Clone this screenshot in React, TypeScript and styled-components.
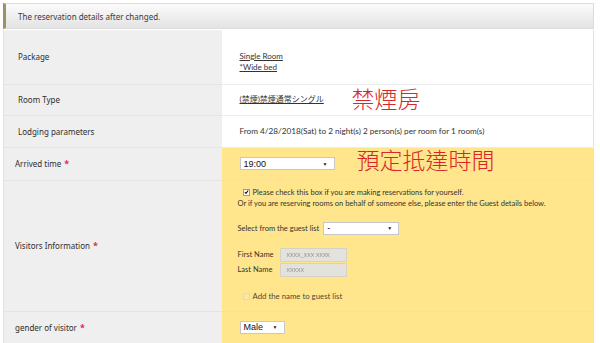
import styled, { createGlobalStyle } from "styled-components";

const GlobalStyle = createGlobalStyle`
  body {
    margin: 0;
    background: #ffffff;
    font-family: "Noto Sans", "Noto Sans CJK JP", sans-serif;
    color: #333333;
  }
`;

const Page = styled.div`
  width: 591px;
  padding: 3px 0 0 3px;
`;

const Header = styled.div`
  height: 26px;
  display: flex;
  align-items: center;
  padding-left: 12px;
  border: 1px solid #dcdcdc;
  border-left: 3px solid #9c9264;
  background: linear-gradient(#fbfbfb, #e3e3e3);
  font-size: 8px;
  color: #3a3a3a;
  box-sizing: border-box;
`;

const Table = styled.table`
  border-collapse: collapse;
  width: 100%;
  margin-top: 1px;
  table-layout: fixed;
  border-left: 1px solid #e2e2e2;
  border-right: 1px solid #e2e2e2;
`;

const Label = styled.td<{ $indent?: number }>`
  width: 218px;
  box-sizing: border-box;
  background: #efefef;
  padding: 0 0 0 ${(p) => p.$indent ?? 14}px;
  font-size: 8px;
  color: #2e2e2e;
  vertical-align: middle;
  border-bottom: 1px solid #e4e4e4;
`;

const Value = styled.td<{ $yellow?: boolean; $h: number; $size?: number }>`
  height: ${(p) => p.$h}px;
  box-sizing: border-box;
  background: ${(p) => (p.$yellow ? "#ffe68c" : "#ffffff")};
  padding: 0 0 0 18px;
  font-family: Lato, "Noto Sans CJK JP", sans-serif;
  font-size: ${(p) => p.$size ?? 8}px;
  color: #333333;
  vertical-align: middle;
  position: relative;
  border-bottom: 1px solid ${(p) => (p.$yellow ? "#fbe090" : "#ececec")};
`;

const Required = styled.span`
  color: #e0245a;
  font-size: 9px;
  font-weight: bold;
  margin-left: 3px;
`;

const LinkText = styled.a`
  color: #333333;
  text-decoration: underline;
  display: block;
  line-height: 11px;
`;

const PackageBox = styled.div`
  padding-top: 10px;
`;

const Note = styled.span<{ $left: number; $top: number }>`
  position: absolute;
  left: ${(p) => p.$left}px;
  top: ${(p) => p.$top}px;
  font-family: "Noto Sans CJK TC", "Noto Sans CJK JP", sans-serif;
  font-size: 23px;
  font-weight: 300;
  color: #d8262a;
  line-height: 25px;
  white-space: nowrap;
`;

const Select = styled.span<{ $w: number }>`
  display: inline-flex;
  align-items: center;
  justify-content: space-between;
  width: ${(p) => p.$w}px;
  height: 13px;
  box-sizing: border-box;
  padding: 0 6px 0 3px;
  background: #ffffff;
  border: 1px solid #c8c8c8;
  font-family: "Liberation Sans", Arial, sans-serif;
  font-size: 9px;
  color: #111111;
  vertical-align: middle;
`;

const Arrow = styled.span`
  font-size: 5px;
  color: #222222;
`;

const Visitors = styled.div`
  display: flex;
  flex-direction: column;
  margin-left: -2px;
  padding: 3px 0 6px;
  font-size: 7.5px;
  line-height: 11px;
`;

const CheckLine = styled.div<{ $faded?: boolean }>`
  display: flex;
  align-items: center;
  gap: 3px;
  padding-left: 5px;
  color: ${(p) => (p.$faded ? "#4a4a3a" : "#333333")};
`;

const Box = styled.span<{ $faded?: boolean }>`
  width: 7px;
  height: 7px;
  box-sizing: border-box;
  border: 1px solid ${(p) => (p.$faded ? "#e8d9a0" : "#9a9a9a")};
  background: ${(p) => (p.$faded ? "#f6e7ae" : "#ffffff")};
  display: inline-flex;
  align-items: center;
  justify-content: center;
`;

const GuestRow = styled.div`
  display: flex;
  align-items: center;
  gap: 4px;
  margin-top: 13px;
`;

const NameGrid = styled.div`
  display: grid;
  grid-template-columns: 42px 67px;
  row-gap: 1px;
  align-items: center;
  margin-top: 13px;
`;

const NameInput = styled.div`
  height: 14px;
  background: #e4e2dc;
  border: 1px solid #d6d2c4;
  box-sizing: border-box;
  display: flex;
  align-items: center;
  padding-left: 6px;
  font-size: 7px;
  color: #9a9a9a;
  filter: blur(0.7px);
`;

const AddLine = styled(CheckLine)`
  margin-top: 14px;
  font-size: 7.8px;
`;

const Check = () => (
  <svg width="6" height="6" viewBox="0 0 6 6">
    <path d="M1 3.2 L2.4 4.6 L5 1.2" stroke="#111" strokeWidth="1.3" fill="none" />
  </svg>
);

export default function App() {
  return (
    <Page>
      <GlobalStyle />
      <Header>The reservation details after changed.</Header>
      <Table>
        <tbody>
          <tr>
            <Label $indent={14}>Package</Label>
            <Value $h={54}>
              <PackageBox>
                <LinkText>Single Room</LinkText>
                <LinkText>*Wide bed</LinkText>
              </PackageBox>
            </Value>
          </tr>
          <tr>
            <Label $indent={14}>Room Type</Label>
            <Value $h={31}>
              <LinkText>(禁煙)禁煙通常シングル</LinkText>
              <Note $left={130} $top={1}>禁煙房</Note>
            </Value>
          </tr>
          <tr>
            <Label $indent={14}>Lodging parameters</Label>
            <Value $h={32} $size={8.2}>
              From 4/28/2018(Sat) to 2 night(s) 2 person(s) per room for 1 room(s)
            </Value>
          </tr>
          <tr>
            <Label $indent={11}>
              Arrived time<Required>*</Required>
            </Label>
            <Value $h={33} $yellow>
              <Select $w={95}>
                19:00<Arrow>▼</Arrow>
              </Select>
              <Note $left={135} $top={-1}>預定抵達時間</Note>
            </Value>
          </tr>
          <tr>
            <Label $indent={11}>
              Visitors Information<Required>*</Required>
            </Label>
            <Value $h={131} $yellow>
              <Visitors>
                <CheckLine>
                  <Box>
                    <Check />
                  </Box>
                  Please check this box if you are making reservations for yourself.
                </CheckLine>
                <div>
                  Or if you are reserving rooms on behalf of someone else, please enter the Guest
                  details below.
                </div>
                <GuestRow>
                  Select from the guest list
                  <Select $w={76}>
                    -<Arrow>▼</Arrow>
                  </Select>
                </GuestRow>
                <NameGrid>
                  <span>First Name</span>
                  <NameInput>xxxx_xxx xxxx</NameInput>
                  <span>Last Name</span>
                  <NameInput>xxxxx</NameInput>
                </NameGrid>
                <AddLine $faded>
                  <Box $faded />
                  Add the name to guest list
                </AddLine>
              </Visitors>
            </Value>
          </tr>
          <tr>
            <Label $indent={11}>
              gender of visitor<Required>*</Required>
            </Label>
            <Value $h={32} $yellow>
              <Select $w={45}>
                Male<Arrow>▼</Arrow>
              </Select>
            </Value>
          </tr>
        </tbody>
      </Table>
    </Page>
  );
}
